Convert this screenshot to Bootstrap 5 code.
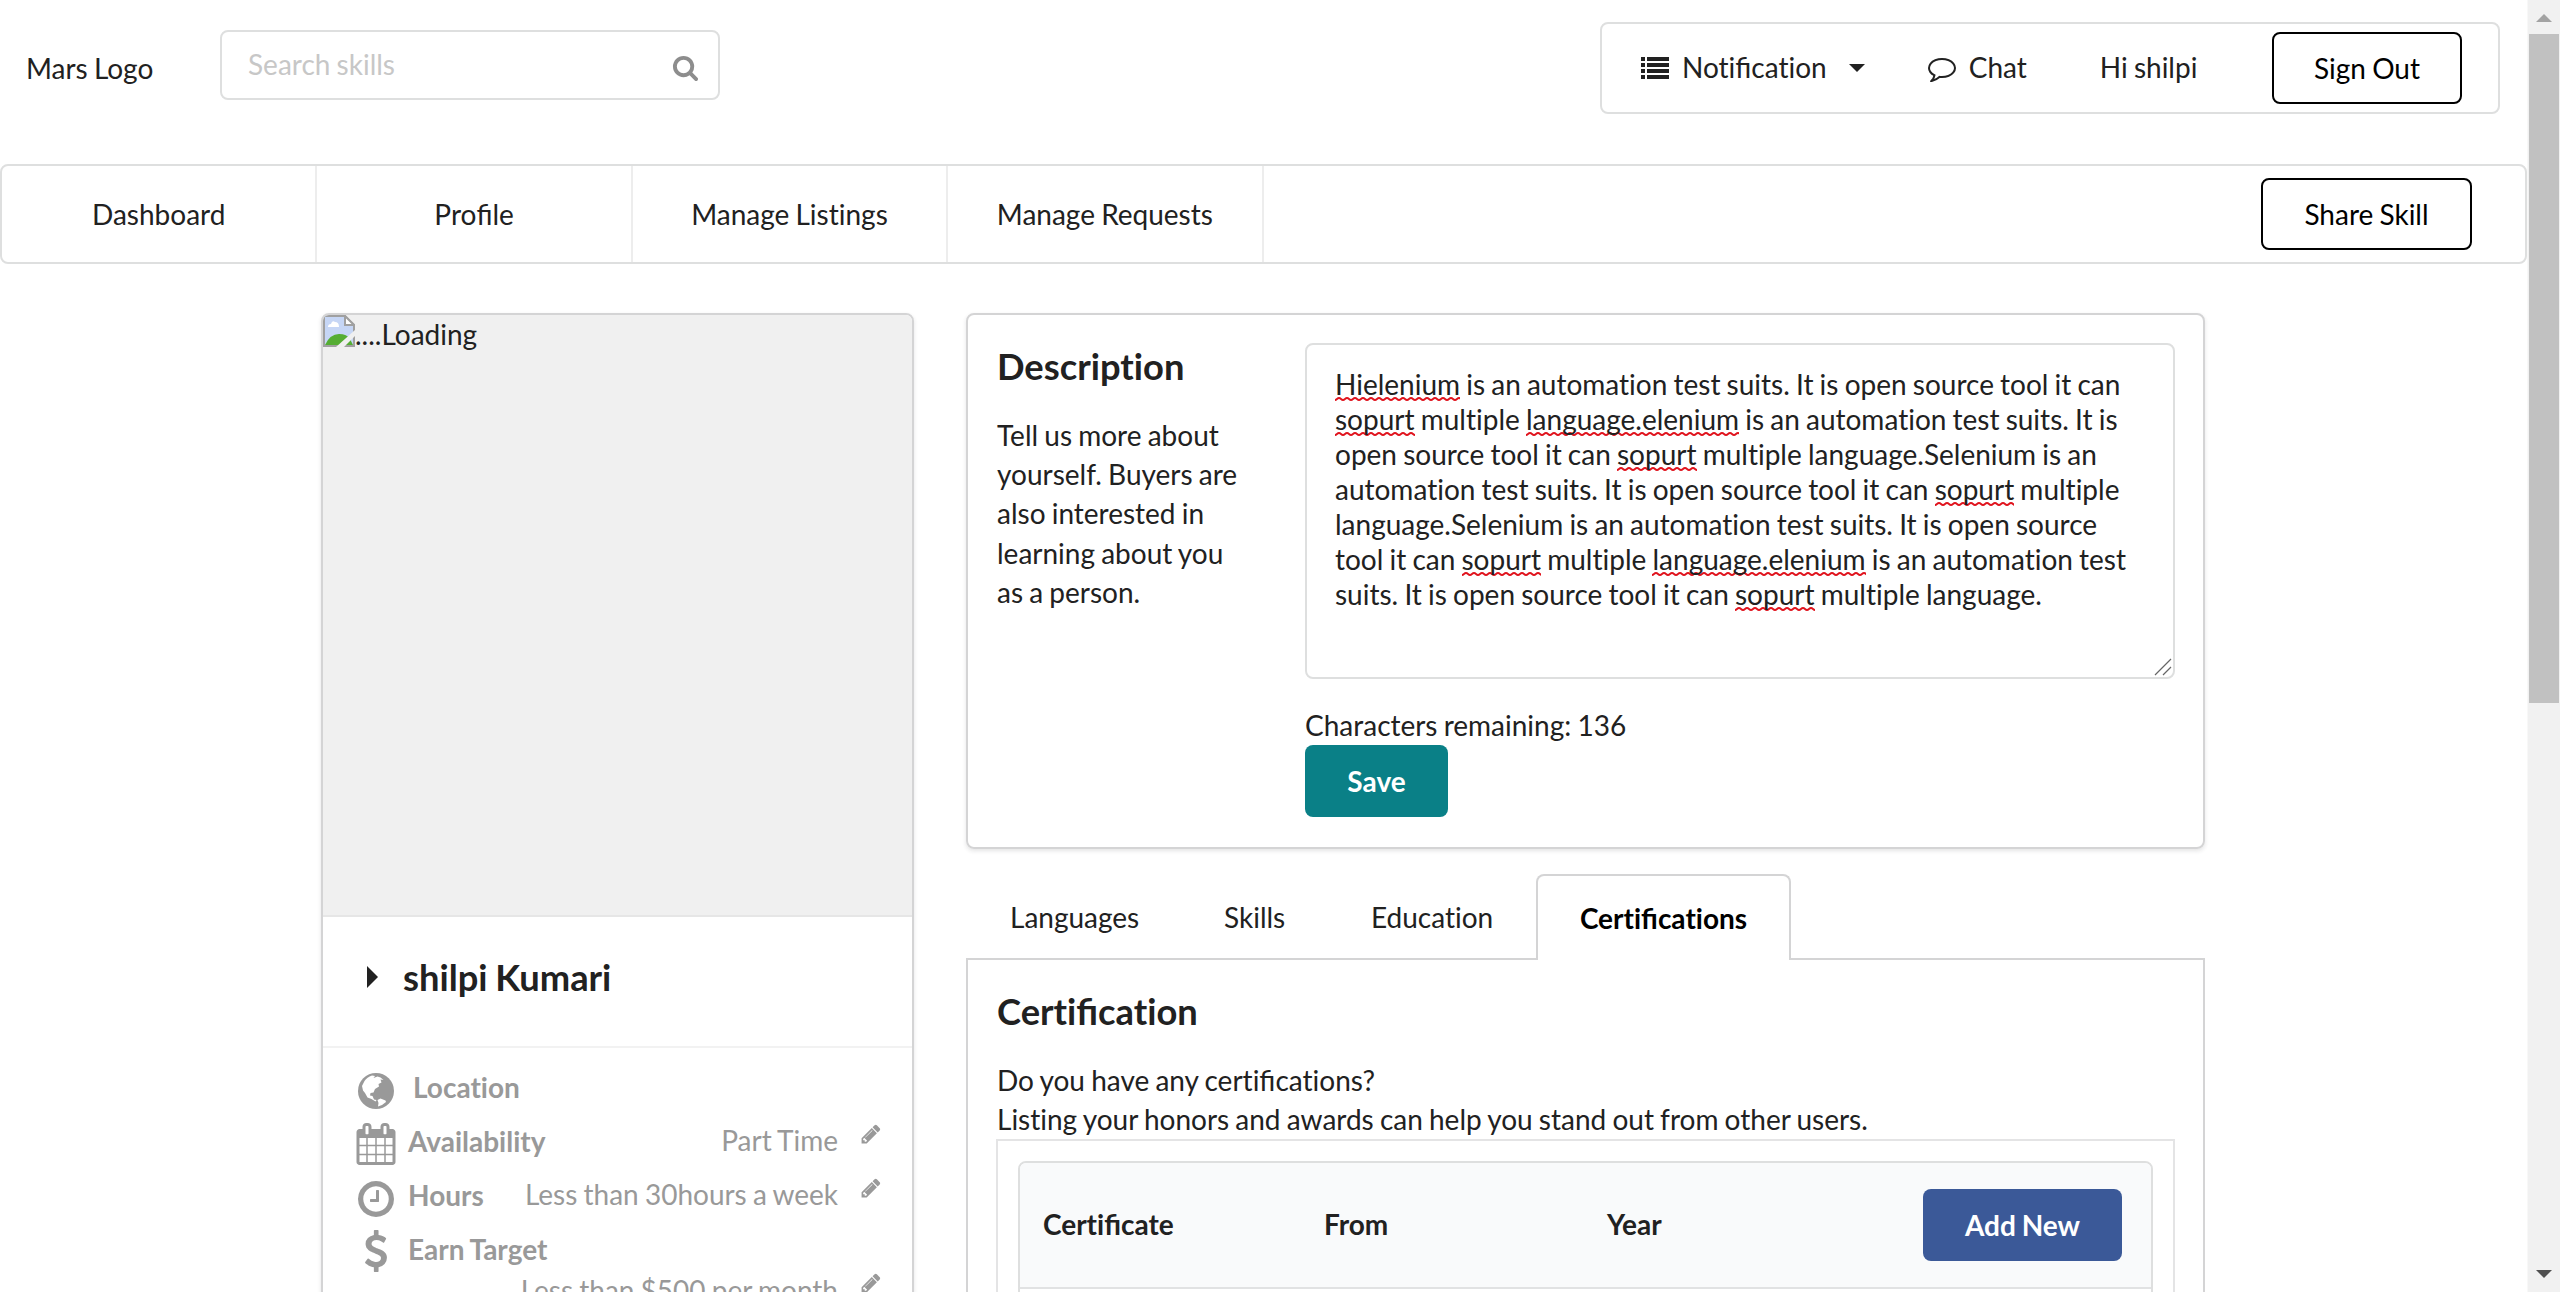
<!DOCTYPE html>
<html lang="en">
<head>
<meta charset="utf-8">
<title>Profile</title>
<link href="https://cdn.jsdelivr.net/npm/bootstrap@5.3.0/dist/css/bootstrap.min.css" rel="stylesheet">
<style>
body{font-family:Lato,"Helvetica Neue",Arial,sans-serif;font-size:28px;line-height:39.2px;color:#212121;height:1292px;overflow:hidden;background:#fff;font-variant-ligatures:none;word-spacing:-1px}
.lig{font-variant-ligatures:common-ligatures}
svg{display:block;fill:currentColor;flex:none}
.page-area{width:2527px;height:1292px;overflow:hidden;flex:none}
.sky-line{border:2px solid #dedfdf;border-radius:8px}
.top-row{height:136px;padding:0 27px 0 26px}
.brand-text{width:194px;height:39px;margin-top:49px}
.search-box{width:500px;height:70px;margin-top:30px;padding:0 19px 0 26px;color:#c7c7c7}
.search-box svg{color:#8d8d8d;margin-top:5px}
.account-bar{width:900px;height:92px;margin-top:22px;padding-left:39px;color:#212121}
.btn-line{height:72px;border:2px solid #000;border-radius:8px;font-size:28px;color:#000;padding:0;line-height:40px;background:#fff}
.btn{word-spacing:-1px}
.main-nav{height:100px;margin-top:28px}
.main-nav .nav-link{width:315.4px;height:96px;color:#212121;border-right:2px solid #ededed;padding:0;line-height:39px}
.side-card,.info-card{border:2px solid #d4d4d5;border-radius:8px;box-shadow:0 2px 4px rgba(34,36,38,.12)}
.body-row{margin-top:49px;padding-left:321px;gap:52px}
.side-card{width:593px;height:1100px;overflow:hidden}
.photo-area{height:602px;background:#f0f0f0;border-bottom:2px solid #e6e6e6}
.name-row{height:131px;border-bottom:2px solid #f2f2f2;padding:0 0 9px 42px}
.heading-text{font-weight:700;font-size:36.3px;line-height:46px;margin:0}
.facts{color:#999;padding:20px 30px 0 33px}
.fact-row{height:54px}
.fact-row b{line-height:39px}
.fact-row .ms-auto{margin-top:-1px}
.pic-slot{width:40px;margin-right:12px}
.pen{margin-left:22px;margin-top:1px}
.info-card{width:1239px;height:536px;padding:28px 28px 28px 29px}
.info-left{width:308px}
.about-text{margin:27px 0 0;line-height:39.2px;white-space:nowrap}
.bio-box{height:336px;width:870px;padding:22px 28px;line-height:35px;white-space:nowrap;position:relative}
.bio-box u{text-decoration:none;background:url("data:image/svg+xml,%3Csvg xmlns='http://www.w3.org/2000/svg' width='8' height='4'%3E%3Cpath d='M0 3Q1 3 2 2T4 1T6 2T8 3' fill='none' stroke='%23e0141e' stroke-width='1.8'/%3E%3C/svg%3E") repeat-x left bottom}
.grip{position:absolute;right:1px;bottom:1px}
.btn-fill{height:72px;border:0;border-radius:8px;font-size:28px;font-weight:700;color:#fff;padding:0}
.save-btn{width:143px;background:#0a8087}
.add-btn{width:199px;background:#3b5998}
.tabs-row{margin-top:25px;height:86px;border-bottom:2px solid #d4d4d5;flex-wrap:nowrap}
.tabs-row .nav-link{color:#212121;border:0;padding:3px 0 0 44px;height:84px;line-height:39px}
.tabs-row .nav-link.active{color:#000;font-weight:700;border:2px solid #d4d4d5;border-bottom:0;border-radius:8px 8px 0 0;height:86px;width:255px;padding:0;background:#fff}
.cert-pane{border:solid #d4d4d5;border-width:0 2px;padding:28px 28px 0 29px;height:600px}
.cert-frame{border:2px solid #e4e4e5;padding:20px;height:400px;margin-left:-1px}
.cert-grid{height:380px;border-radius:8px 8px 0 0}
.cert-head{height:126px;background:#f9fafb;border-bottom:2px solid #e1e2e3;padding:0 29px 0 23px;border-radius:6px 6px 0 0}
.cert-head span:not(.lig){padding-bottom:2px}
.scroll-rail{width:33px;background:#f1f1f1;border-left:1px solid #f8f8f8}
.scroll-grab{width:30px;height:669px;background:#c1c1c1}
</style>
</head>
<body class="d-flex">
<div class="page-area">
  <header class="top-row d-flex align-items-start">
    <div class="brand-text">Mars Logo</div>
    <div class="search-box sky-line d-flex align-items-center justify-content-between"><span>Search skills</span>
      <svg width="27" height="27" viewBox="0 0 1792 1792"><path d="M1216 832q0-185-131.500-316.500t-316.500-131.500-316.500 131.500-131.500 316.500 131.500 316.500 316.500 131.500 316.500-131.500 131.500-316.500zm512 832q0 52-38 90t-90 38q-54 0-90-38l-343-342q-179 124-399 124-143 0-273.500-55.500t-225-150-150-225-55.500-273.500 55.500-273.500 150-225 225-150 273.500-55.500 273.500 55.500 225 150 150 225 55.500 273.500q0 220-124 399l343 343q37 37 37 90z"/></svg>
    </div>
    <div class="account-bar sky-line d-flex align-items-center ms-auto">
      <svg width="28" height="23" viewBox="0 0 28 23" fill="#333"><path d="M0 0h4v4H0zM6 0h22v4H6zM0 6h4v4H0zM6 6h22v4H6zM0 12h4v4H0zM6 12h22v4H6zM0 18h4v4H0zM6 18h22v4H6z"/></svg>
      <span style="margin-left:13px">Noti<span class="lig">fi</span>cation</span>
      <svg style="margin-left:22px" width="16" height="8" viewBox="0 0 16 8"><path d="M0 0h16L8 8z"/></svg>
      <svg style="margin-left:63px" width="28" height="28" viewBox="0 0 1792 1792"><path d="M896 384q-204 0-381.500 69.500t-282 187.500-104.500 255q0 112 71.500 213.500t201.500 175.500l87 50-27 96q-24 91-70 172 152-63 275-171l43-38 57 6q69 8 130 8 204 0 381.500-69.500t282-187.500 104.500-255-104.500-255-282-187.500-381.500-69.500zm896 512q0 174-120 321.500t-326 233-450 85.500q-70 0-145-8-198 175-460 242-49 14-114 22h-5q-15 0-27-10.500t-16-27.500v-1q-3-4-.5-12t2-10 4.500-9.500l6-9 7-8.500 8-9q7-8 31-34.500t34.500-38 31-39.500 32.500-51 27-59 26-76q-157-89-247.500-220t-90.500-281q0-174 120-321.500t326-233 450-85.500 450 85.500 326 233 120 321.500z"/></svg>
      <span style="margin-left:13px">Chat</span>
      <span style="margin-left:73px">Hi shilpi</span>
      <button class="btn btn-line ms-auto" style="width:190px;margin-right:36px">Sign Out</button>
    </div>
  </header>
  <nav class="main-nav sky-line d-flex align-items-center">
    <a class="nav-link d-flex align-items-center justify-content-center">Dashboard</a>
    <a class="nav-link d-flex align-items-center justify-content-center"><span>Pro<span class="lig">fi</span>le</span></a>
    <a class="nav-link d-flex align-items-center justify-content-center">Manage Listings</a>
    <a class="nav-link d-flex align-items-center justify-content-center">Manage Requests</a>
    <button class="btn btn-line ms-auto" style="width:211px;margin-right:53px">Share Skill</button>
  </nav>
  <div class="body-row d-flex align-items-start">
    <aside class="side-card">
      <div class="photo-area d-flex align-items-start">
        <svg width="32" height="32" viewBox="0 0 32 32"><path d="M1 1h21l9 9v21H1z" fill="#c6d6f5" stroke="#a0a0a0" stroke-width="2"/><path d="M22 1v9h9z" fill="#fff" stroke="#a0a0a0" stroke-width="2"/><path d="M5 12q0-3 3-3 1-4 4-2 4 0 4 5z" fill="#fff"/><path d="M2 30q5-11 14-11 8 0 11 5l3 6z" fill="#55ad33"/><path d="M32 15v6L21 32h-8z" fill="#f0f0f0"/></svg>
        <span>....Loading</span>
      </div>
      <div class="name-row d-flex align-items-center">
        <svg width="14" height="22" viewBox="0 0 14 22"><path d="M2 0l11 11L2 22z"/></svg>
        <h3 class="heading-text" style="margin-left:24px">shilpi Kumari</h3>
      </div>
      <div class="facts">
        <div class="fact-row d-flex align-items-start">
          <span class="pic-slot d-flex justify-content-center"><svg style="margin-top:5px" width="36" height="36" viewBox="0 0 36 36"><circle cx="18" cy="18" r="18"/><path d="M6.500 8Q9 4 14 2.500l3 .5-1.500 2 4-1.500 3 1 3 2.500-3-.5 1 3-3 1.500.5 2.500-4 2.500-1.500 3.500-3 .5-.5 2.500 2.500.5 1.500 3.500 2.500.5-1 1.500-4-2.500-4-1.500-2.500-4.500-2-2.500L4 13z" fill="#fff"/><path d="M19.500 27l3-1.500 5 2 .5 1.500-4 3-4 1.500.5-3.500z" fill="#fff"/></svg></span>
          <b style="margin-left:5px">Location</b>
        </div>
        <div class="fact-row d-flex align-items-start">
          <span class="pic-slot d-flex justify-content-center"><svg style="margin-top:1px" width="42" height="42" viewBox="0 0 1792 1792"><path d="M192 1664h288v-288h-288v288zm352 0h320v-288h-320v288zm-352-352h288v-320h-288v320zm352 0h320v-320h-320v320zm-352-384h288v-288h-288v288zm736 736h320v-288h-320v288zm-384-736h320v-288h-320v288zm768 736h288v-288h-288v288zm-384-352h320v-320h-320v320zm-352-864v-288q0-13-9.500-22.500t-22.500-9.500h-64q-13 0-22.500 9.500t-9.500 22.500v288q0 13 9.500 22.500t22.500 9.500h64q13 0 22.500-9.500t9.500-22.500zm736 864h288v-320h-288v320zm-384-384h320v-288h-320v288zm384 0h288v-288h-288v288zm32-480v-288q0-13-9.500-22.500t-22.500-9.500h-64q-13 0-22.500 9.500t-9.500 22.500v288q0 13 9.500 22.500t22.500 9.500h64q13 0 22.500-9.500t9.500-22.500zm384-64v1280q0 52-38 90t-90 38h-1408q-52 0-90-38t-38-90v-1280q0-52 38-90t90-38h128v-96q0-66 47-113t113-47h64q66 0 113 47t47 113v96h384v-96q0-66 47-113t113-47h64q66 0 113 47t47 113v96h128q52 0 90 38t38 90z"/></svg></span>
          <b>Availability</b><span class="ms-auto">Part Time</span>
          <svg class="pen" width="22" height="22" viewBox="0 0 1792 1792"><path id="pen" d="M491 1536l91-91-235-235-91 91v107h128v128h107zm523-928q0-22-22-22-10 0-17 7l-542 542q-7 7-7 17 0 22 22 22 10 0 17-7l542-542q7-7 7-17zm-54-192l416 416-832 832h-416v-416zm683 96q0 53-37 90l-166 166-416-416 166-165q36-38 90-38 53 0 91 38l235 234q37 39 37 91z"/></svg>
        </div>
        <div class="fact-row d-flex align-items-start">
          <span class="pic-slot d-flex justify-content-center"><svg style="margin-top:2px" width="42" height="42" viewBox="0 0 1792 1792"><path d="M1024 544v448q0 14-9 23t-23 9h-320q-14 0-23-9t-9-23v-64q0-14 9-23t23-9h224v-352q0-14 9-23t23-9h64q14 0 23 9t9 23zm416 352q0-148-73-273t-198-198-273-73-273 73-198 198-73 273 73 273 198 198 273 73 273-73 198-198 73-273zm224 0q0 209-103 385.500t-279.500 279.500-385.500 103-385.500-103-279.500-279.500-103-385.500 103-385.500 279.500-279.500 385.500-103 385.500 103 279.500 279.500 103 385.500z"/></svg></span>
          <b>Hours</b><span class="ms-auto">Less than 30hours a week</span>
          <svg class="pen" width="22" height="22" viewBox="0 0 1792 1792"><use href="#pen"/></svg>
        </div>
        <div class="d-flex align-items-start" style="height:41px">
          <span class="pic-slot d-flex justify-content-center"><svg width="42" height="42" viewBox="0 0 1792 1792"><path d="M1362 1185q0 153-99.500 263.500t-258.500 136.500v175q0 14-9 23t-23 9h-135q-13 0-22.500-9.500t-9.500-22.500v-175q-66-9-127.500-31t-101.500-44.500-74-48-46.500-37.500-17.500-18q-17-21-2-41l103-135q7-10 23-12 15-2 24 9l2 2q113 99 243 125 37 8 74 8 81 0 142.500-43t61.500-122q0-28-15-53t-33.500-42-58.500-37.500-66-32-80-32.500q-39-16-61.500-25t-61.500-26.500-62.500-31-56.500-35.500-53.500-42.500-43.500-49-35.500-58-21-66.500-8.500-78q0-138 98-242t255-134v-180q0-13 9.500-22.500t22.500-9.500h135q14 0 23 9t9 23v176q57 6 110.500 23t87 33.500 63.500 37.500 39 29 15 14q17 18 5 38l-81 146q-8 15-23 16-14 3-27-7-3-3-14.500-12t-39-26.500-58.500-32-74.500-26-85.500-11.500q-95 0-155 43t-60 111q0 26 8.500 48t29.500 41.500 39.500 33 56 31 60.500 27 70 27.500q53 20 81 31.500t76 35 75.500 42.500 62 50 53 63.500 31.500 76.500 13 94z"/></svg></span>
          <b>Earn Target</b>
        </div>
        <div class="d-flex align-items-start justify-content-end"><span>Less than $500 per month</span>
          <svg class="pen" width="22" height="22" viewBox="0 0 1792 1792"><use href="#pen"/></svg></div>
      </div>
    </aside>
    <main>
      <section class="info-card d-flex">
        <div class="info-left">
          <h3 class="heading-text">Description</h3>
          <p class="about-text">Tell us more about<br>yourself. Buyers are<br>also interested in<br>learning about you<br>as a person.</p>
        </div>
        <div>
          <div class="bio-box sky-line"><u>Hielenium</u> is an automation test suits. It is open source tool it can<br><u>sopurt</u> multiple <u>language.elenium</u> is an automation test suits. It is<br>open source tool it can <u>sopurt</u> multiple language.Selenium is an<br>automation test suits. It is open source tool it can <u>sopurt</u> multiple<br>language.Selenium is an automation test suits. It is open source<br>tool it can <u>sopurt</u> multiple <u>language.elenium</u> is an automation test<br>suits. It is open source tool it can <u>sopurt</u> multiple language.
            <svg class="grip" width="18" height="20" viewBox="0 0 18 20" fill="none" stroke="#666" stroke-width="1.2"><path d="M1 19L17 3M9 19l8-8"/></svg>
          </div>
          <div style="margin-top:27px">Characters remaining: 136</div>
          <button class="btn btn-fill save-btn d-block">Save</button>
        </div>
      </section>
      <div class="tabs-row nav nav-tabs">
        <a class="nav-link d-flex align-items-center" style="width:214px">Languages</a>
        <a class="nav-link d-flex align-items-center" style="width:147px">Skills</a>
        <a class="nav-link d-flex align-items-center" style="width:209px">Education</a>
        <a class="nav-link active d-flex align-items-center justify-content-center"><span>Certi<span class="lig">fi</span>cations</span></a>
      </div>
      <section class="cert-pane">
        <h3 class="heading-text">Certi<span class="lig">fi</span>cation</h3>
        <div style="margin-top:27px">Do you have any certi<span class="lig">fi</span>cations?<br>Listing your honors and awards can help you stand out from other users.</div>
        <div class="cert-frame">
          <div class="cert-grid sky-line">
            <div class="cert-head d-flex align-items-center fw-bold">
              <span style="width:281px">Certi<span class="lig">fi</span>cate</span><span style="width:283px">From</span><span>Year</span>
              <button class="btn btn-fill add-btn ms-auto">Add New</button>
            </div>
          </div>
        </div>
      </section>
    </main>
  </div>
</div>
<div class="scroll-rail d-flex flex-column align-items-center">
  <svg width="16" height="34" viewBox="0 0 16 34" fill="#a3a3a3" color="#a3a3a3"><path d="M0 22h16L8 14z"/></svg>
  <div class="scroll-grab"></div>
  <svg class="mt-auto" width="16" height="34" viewBox="0 0 16 34" color="#505050"><path d="M0 12h16l-8 8z"/></svg>
</div>
<script src="https://cdn.jsdelivr.net/npm/bootstrap@5.3.0/dist/js/bootstrap.bundle.min.js"></script>
</body>
</html>
